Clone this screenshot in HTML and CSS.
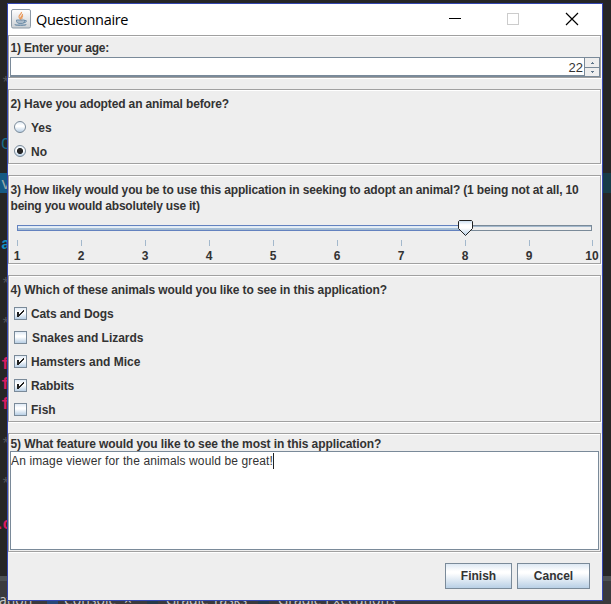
FILE: index.html
```html
<!DOCTYPE html>
<html lang="en">
<head>
<meta charset="utf-8">
<title>Questionnaire</title>
<link rel="stylesheet" href="styles.css">
</head>
<body>
<div class="desktop">
  <div class="backdrop" aria-hidden="true">
    <div class="line-highlight"></div>
    <div class="right-highlight"></div>
    <div class="tabs-strip"></div>
    <span class="code dim c1">*</span>
    <span class="code teal c2">C</span>
    <span class="code pale c3">v</span>
    <span class="code blue c4">a</span>
    <span class="code dim c5">*</span>
    <span class="code dim c6">*</span>
    <span class="code pink c7">f</span>
    <span class="code pink c8">f</span>
    <span class="code pink c9">f</span>
    <span class="code dim c10">*</span>
    <span class="code dim c11">*</span>
    <span class="code pink c12">.c</span>
    <span class="tab t1">ation</span><i class="tab-icon i1"></i>
    <span class="tab t2">Console</span><span class="tab t5">×</span><i class="tab-icon i2"></i>
    <span class="tab t3">Gradle Tasks</span><i class="tab-icon i3"></i>
    <span class="tab t4">Gradle Executions</span>
  </div>

  <main class="window">
    <header class="titlebar">
      <svg class="app-icon" width="20" height="20" viewBox="0 0 20 20">
        <defs><linearGradient id="ic" x1="0" y1="0" x2="0" y2="1"><stop offset="0" stop-color="#fff"/><stop offset="1" stop-color="#c9ced3"/></linearGradient></defs>
        <rect x=".5" y=".5" width="19" height="18.500" rx="1.500" fill="url(#ic)" stroke="#8d9aa6"/>
        <path d="M10.500 3C11 5 7.500 6 8 8C8.200 9 9 9.500 9.500 10C9 8 12 7 11.500 5M12 6.500C10.500 7.500 10.500 8.500 11 10" fill="none" stroke="#e99a5c" stroke-width="1.200"/>
        <path d="M5.500 11h8v1.500q-.5 2-2 2H8q-2-.5-2.500-2zM13.500 11.500q2.500-.5 1.800 1t-2.800 1.200M4 15q-1 1.500 5.500 1.500T15 15" fill="#6f91ad" fill-opacity=".45" stroke="#6b8ba6" stroke-width=".9"/>
      </svg>
      <span class="title">Questionnaire</span>
      <svg class="controls" width="131" height="14" viewBox="0 0 131 14" shape-rendering="crispEdges">
        <path d="M0 6.500h12" stroke="#000"/>
        <rect x="58.500" y="1.500" width="11" height="11" fill="none" stroke="#ccc"/>
        <path d="M117 1l12 12M129 1l-12 12" stroke="#000" stroke-width="1.200" shape-rendering="auto"/>
      </svg>
    </header>

    <section class="group age">
      <h2><span class="q1">1) Enter your age:</span></h2>
      <div class="spinner">
        <div class="spin-value">22</div>
        <div class="spin-buttons">
          <div class="spin-button"><svg width="3" height="2" shape-rendering="crispEdges"><path d="M1 0h1v1h1v1H0V1h1z" fill="#62788c"/></svg></div>
          <div class="spin-button"><svg width="3" height="2" shape-rendering="crispEdges"><path d="M0 0h3v1H2v1H1V1H0z" fill="#62788c"/></svg></div>
        </div>
      </div>
    </section>

    <section class="group adopted">
      <h2><span class="q2">2) Have you adopted an animal before?</span></h2>
      <div class="option"><i class="radio"></i><span>Yes</span></div>
      <div class="option"><i class="radio on"></i><span>No</span></div>
    </section>

    <section class="group likely">
      <h2><span class="q3">3) How likely would you be to use this application in seeking to adopt an animal? (1 being not at all, 10</span><br><span class="q3b">being you would absolutely use it)</span></h2>
      <div class="slider">
        <div class="track"><div class="fill"></div></div>
        <svg class="thumb" width="15" height="16" viewBox="0 0 15 16">
          <defs><linearGradient id="th" x1="0" y1="0" x2="0" y2="1"><stop offset="0" stop-color="#c8dcef"/><stop offset=".3" stop-color="#fff"/><stop offset=".5" stop-color="#fff"/><stop offset="1" stop-color="#b4cce3"/></linearGradient></defs>
          <path d="M1.500.5h12l1 1V8.500L7.500 15.500L.5 8.500V1.500z" fill="url(#th)" stroke="#222"/>
        </svg>
      </div>
      <div class="scale">
        <span>1</span><span>2</span><span>3</span><span>4</span><span>5</span><span>6</span><span>7</span><span>8</span><span>9</span><span class="last">10</span>
      </div>
    </section>

    <section class="group animals">
      <h2><span class="q4">4) Which of these animals would you like to see in this application?</span></h2>
      <div class="option"><i class="check"><svg width="7" height="7" viewBox="0 0 7 7" shape-rendering="crispEdges"><path d="M0 2h2v2h1V3h1V2h1V1h1V0h1v2H6v1H5v1H4v1H3v1H2v1H0z" fill="#222"/></svg></i><span class="a1">Cats and Dogs</span></div>
      <div class="option"><i class="check"></i><span class="a2">Snakes and Lizards</span></div>
      <div class="option"><i class="check"><svg width="7" height="7" viewBox="0 0 7 7" shape-rendering="crispEdges"><path d="M0 2h2v2h1V3h1V2h1V1h1V0h1v2H6v1H5v1H4v1H3v1H2v1H0z" fill="#222"/></svg></i><span class="a3">Hamsters and Mice</span></div>
      <div class="option"><i class="check"><svg width="7" height="7" viewBox="0 0 7 7" shape-rendering="crispEdges"><path d="M0 2h2v2h1V3h1V2h1V1h1V0h1v2H6v1H5v1H4v1H3v1H2v1H0z" fill="#222"/></svg></i><span class="a4">Rabbits</span></div>
      <div class="option"><i class="check"></i><span>Fish</span></div>
    </section>

    <section class="group feature">
      <h2><span class="q5">5) What feature would you like to see the most in this application?</span></h2>
      <div class="textarea"><span class="answer">An image viewer for the animals would be great!</span><i class="caret"></i></div>
    </section>

    <footer class="actions">
      <button class="finish">Finish</button>
      <button class="cancel">Cancel</button>
    </footer>
  </main>
</div>
</body>
</html>
```
FILE: styles.css
```css
* { box-sizing: border-box; }
body { margin: 0; font: 12px "Liberation Sans", Arial, sans-serif; color: #333; }
.desktop { position: relative; width: 611px; height: 604px; padding: 3px 8px 3px 7px; background: #262626; overflow: hidden; }

.backdrop { position: absolute; inset: 0; }
.backdrop > * { position: absolute; }
.line-highlight { left: 0; top: 173px; width: 8px; height: 20px; background: #165a84; }
.right-highlight { right: 0; top: 173px; width: 8px; height: 20px; background: #173c48; }
.tabs-strip { left: 0; right: 0; bottom: 0; height: 28px; background: linear-gradient(#4c5052 0 5px, #3a3a3d 5px); }
.code { left: 1px; margin-top: 1px; font: 16px/20px "Liberation Mono", monospace; white-space: pre; }
.dim { color: #555; }
.teal { color: #186b8a; }
.pale { color: #9aa; }
.blue { color: #1290c3; font-weight: bold; }
.pink { color: #d81b60; font-weight: bold; }
.c1 { top: 73px; } .c2 { top: 134px; } .c3 { top: 174px; } .c4 { top: 234px; }
.c5 { top: 274px; } .c6 { top: 314px; } .c7 { top: 354px; } .c8 { top: 374px; }
.c9 { top: 394px; } .c10 { top: 434px; } .c11 { top: 474px; } .c12 { top: 514px; left: -5px; letter-spacing: -2px; }
.tab { top: 590px; font: 14px/20px "Open Sans", sans-serif; color: #c8c8c8; white-space: pre; }
.t1 { left: -1px; } .t2 { left: 64px; } .t3 { left: 166px; letter-spacing: -.2px; } .t4 { left: 278px; } .t5 { left: 124px; }
.tab-icon { top: 594px; width: 11px; height: 10px; background: #284878; }
.i1 { left: 47px; } .i2 { left: 147px; background: #263a48; } .i3 { left: 258px; background: #263a48; }

.window { position: relative; display: flex; flex-direction: column; width: 596px; height: 598px; border: 1px solid #3346b0; background: #eee; }
.titlebar { display: flex; height: 31px; flex: none; background: #fff; padding: 5px 22px 0 3px; }
.app-icon { flex: none; }
.title { margin-left: 5px; font: 14.5px/21px "Open Sans", sans-serif; letter-spacing: -.32px; color: #000; }
.controls { margin: 3px 0 0 auto; }

.group { flex: none; width: 593px; margin-bottom: 11px; border: 1px solid #a0a0a0; box-shadow: inset 1px 1px #fff, 1px 1px #fff; padding-left: 1px; }
.age { height: 43px; } .adopted { height: 75px; } .likely { height: 89px; }
.animals { height: 147px; } .feature { height: 119px; }
h2 { margin: 0; padding-left: .5px; font: bold 12px/16px "Liberation Sans", Arial, sans-serif; white-space: nowrap; }
.q1 { letter-spacing: -.19px; }
.q2 { letter-spacing: -.13px; }
.q3 { letter-spacing: -.146px; }
.q3b { letter-spacing: -.2px; }
.q4 { letter-spacing: -.112px; }
.q5 { letter-spacing: -.09px; }
.age h2 { padding-top: 4px; height: 21px; }
.adopted h2, .likely h2, .animals h2 { padding-top: 6px; }
.feature h2 { padding-top: 2px; height: 17px; }

.spinner { display: flex; width: 590px; height: 20px; border: 1px solid #7a8a99; background: #fff; }
.spin-value { flex: 1; border-bottom: 1px solid #7a8a99; height: 18px; text-align: right; font-size: 13px; line-height: 20px; padding-right: 1px; }
.spin-buttons { width: 15px; border-left: 1px solid #7a8a99; }
.spin-button { display: flex; height: 9px; align-items: center; justify-content: center; background: #eee; }
.spin-button + .spin-button { border-top: 1px solid #7a8a99; }

.option { display: flex; align-items: center; height: 24px; padding-left: 4px; font-weight: bold; white-space: nowrap; }
.adopted .option:first-of-type, .animals .option:first-of-type { margin-top: 4px; }
.adopted .option, .animals .option { position: relative; top: -1px; }
.option span { margin-left: 4px; padding-top: 1px; }
.option .a2 { margin-left: 5px; letter-spacing: -.04px; }
.option .a1, .option .a4 { letter-spacing: -.12px; }
.radio, .check { flex: none; width: 13px; height: 13px; border: 1px solid #7a8a99; background: linear-gradient(#dfeaf5, #fff 35%, #fff 45%, #b8cfe5); }
.radio { width: 12px; height: 12px; border-radius: 50%; margin-right: 1px; }
.on { background: radial-gradient(circle, #262626 0 2.700px, transparent 3.400px), linear-gradient(#dfeaf5, #fff 35%, #fff 45%, #b8cfe5); }
.check { display: flex; align-items: center; justify-content: center; }

.slider { position: relative; height: 26px; padding: 11px 0 0 7px; }
.track { width: 575px; height: 6px; border: 1px solid #7a8a99; background: linear-gradient(#a3b8cc 1px, #eee 1px); }
.fill { width: 448px; height: 6px; margin: -1px; border: 1px solid #6382bf; background: linear-gradient(#c8dcee, #fff 30%, #a3bfd9 60%, #a3b8cc); }
.thumb { position: absolute; left: 448px; top: 6px; }
.scale { display: flex; width: 591px; margin-left: -25px; font-weight: bold; }
.scale span { flex: 0 0 64px; display: flex; flex-direction: column; align-items: center; line-height: 14px; }
.scale span::before { content: ""; width: 1px; height: 6px; background: #a3b8cc; margin-bottom: 3px; }
.scale .last { margin-left: -1px; }

.textarea { display: flex; width: 589px; height: 99px; border: 1px solid #7a8a99; background: #fff; white-space: nowrap; }
.answer { line-height: 19px; letter-spacing: .125px; }
.caret { width: 1px; height: 16px; background: #222; margin-top: 1px; }
.actions { display: flex; justify-content: flex-end; gap: 5px; padding-right: 12px; }
button { height: 26px; margin: 0; padding: 0; border: 1px solid #7a8a99; border-radius: 0; background: linear-gradient(#dde8f3, #fff 30%, #fff 38%, #b8cfe5); font: bold 12px "Liberation Sans", Arial, sans-serif; color: #333; }
.finish { width: 67px; } .cancel { width: 73px; }
```
